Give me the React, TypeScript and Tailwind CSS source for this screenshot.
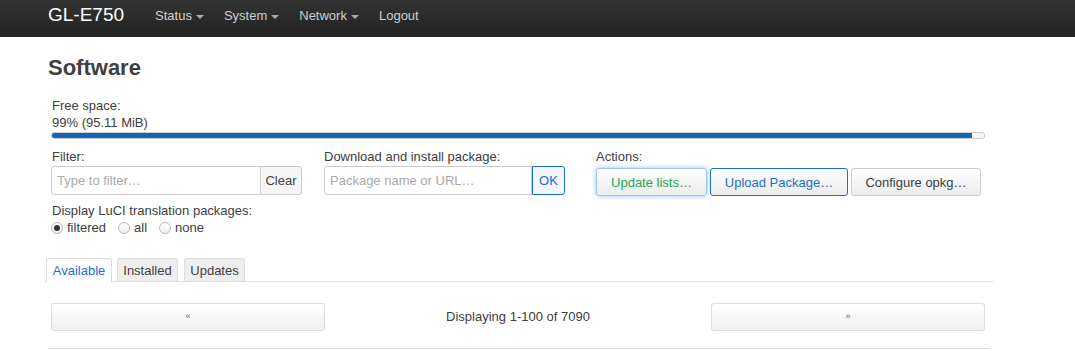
export default function App() {
  const font = { fontFamily: '"Liberation Sans", Arial, sans-serif' };
  const btn =
    'h-[28px] rounded-[3px] border bg-gradient-to-b from-white to-[#ececec] text-[13px] leading-none';
  const tab = 'h-[23px] border border-b-0 border-[#ddd] rounded-t-[3px] text-[13px] leading-[23px] text-center';

  return (
    <div style={font} className="min-h-screen bg-white text-[#404040]">
      {/* Navbar */}
      <nav className="h-[37px] bg-gradient-to-b from-[#333333] to-[#222222] flex items-center pl-[48px]">
        <span className="text-white text-[19px] mr-[31px] -mt-[6px]">GL-E750</span>
        <div className="flex items-center gap-[20px] text-[13px] text-[#d0d0d0] -mt-[5px]">
          {['Status', 'System', 'Network'].map((t) => (
            <span key={t} className="flex items-center gap-[4px]">
              {t}
              <span className="inline-block w-0 h-0 border-x-[4px] border-x-transparent border-t-[4px] border-t-[#aaa] mt-[2px]" />
            </span>
          ))}
          <span>Logout</span>
        </div>
      </nav>

      <main className="ml-[48px] w-[945px]">
        <h2 className="text-[22px] font-bold mt-[17px] leading-[28px] text-[#404040]">Software</h2>

        <div className="ml-[3px] w-[934px] text-[13px]">
          <div className="mt-[15px] leading-[17px] pl-[1px]">Free space:</div>
          <div className="leading-[17px] pl-[1px]">99% (95.11 MiB)</div>
          <div className="mt-[1px] h-[7px] rounded-[3px] border border-[#ccc] bg-[#f5f5f5] overflow-hidden w-[934px]">
            <div className="h-full w-[98.7%] bg-[#1565c0]" />
          </div>

          <div className="grid grid-cols-[273px_272px_1fr] mt-[9px]">
            <div>
              <div className="leading-[17px] pl-[1px]">Filter:</div>
              <div className="flex mt-[1px]">
                <input
                  placeholder="Type to filter…"
                  className="w-[210px] h-[29px] border border-[#ccc] rounded-l-[3px] px-[5px] text-[13px] placeholder-[#aaa] outline-none"
                />
                <button className="h-[29px] w-[41px] border border-l-0 border-[#ccc] rounded-r-[3px] bg-[#f5f5f5] text-[13px] text-[#404040]">
                  Clear
                </button>
              </div>
            </div>
            <div>
              <div className="leading-[17px]">Download and install package:</div>
              <div className="flex mt-[1px]">
                <input
                  placeholder="Package name or URL…"
                  className="w-[208px] h-[29px] border border-[#ccc] rounded-l-[3px] px-[5px] text-[13px] placeholder-[#aaa] outline-none"
                />
                <button className="h-[29px] w-[33px] border border-[#1a6fd0] rounded-r-[3px] bg-[#f5f5f5] text-[13px] text-[#1a6fd0]">
                  OK
                </button>
              </div>
            </div>
            <div>
              <div className="leading-[17px]">Actions:</div>
              <div className="flex gap-[3px] mt-[3px]">
                <button className={`${btn} w-[111px] border-[#9ec5f0] text-[#1ea84f] shadow-[0_0_5px_rgba(80,150,230,0.6)]`}>
                  Update lists…
                </button>
                <button className={`${btn} w-[138px] border-[#1a6fd0] text-[#1a6fd0]`}>Upload Package…</button>
                <button className={`${btn} w-[130px] border-[#ccc] text-[#404040]`}>Configure opkg…</button>
              </div>
            </div>
          </div>

          <div className="mt-[6px] leading-[17px] pl-[1px]">Display LuCI translation packages:</div>
          <div className="flex items-center gap-[12px] leading-[17px]">
            {[
              ['filtered', true],
              ['all', false],
              ['none', false],
            ].map(([label, on]) => (
              <label key={label as string} className="flex items-center gap-[4px]">
                <span className="w-[12px] h-[12px] rounded-full border border-[#bbb] bg-gradient-to-b from-white to-[#eee] flex items-center justify-center">
                  {on && <span className="w-[6px] h-[6px] rounded-full bg-[#333]" />}
                </span>
                {label as string}
              </label>
            ))}
          </div>
        </div>

        {/* Tabs */}
        <div className="mt-[21px] flex items-end border-b border-[#ddd] -ml-[4px] w-[949px] pl-[2px]">
          <span className={`${tab} w-[66px] h-[24px] bg-white text-[#1a6fd0] relative top-[1px]`}>Available</span>
          <span className={`${tab} w-[61px] ml-[5px] bg-[#eee]`}>Installed</span>
          <span className={`${tab} w-[61px] ml-[6px] bg-[#eee]`}>Updates</span>
        </div>

        {/* Pagination */}
        <div className="ml-[3px] w-[934px] mt-[21px] grid grid-cols-[274px_1fr_274px] items-center">
          <button className="h-[28px] rounded-[3px] border border-[#ddd] bg-gradient-to-b from-white to-[#f0f0f0] text-[9px] text-[#666]">
            «
          </button>
          <div className="text-center text-[13px] text-[#404040]">Displaying 1-100 of 7090</div>
          <button className="h-[28px] rounded-[3px] border border-[#ddd] bg-gradient-to-b from-white to-[#f0f0f0] text-[9px] text-[#666]">
            »
          </button>
        </div>
        <div className="mt-[17px] border-t border-[#ddd] w-[942px]" />
      </main>
    </div>
  );
}
